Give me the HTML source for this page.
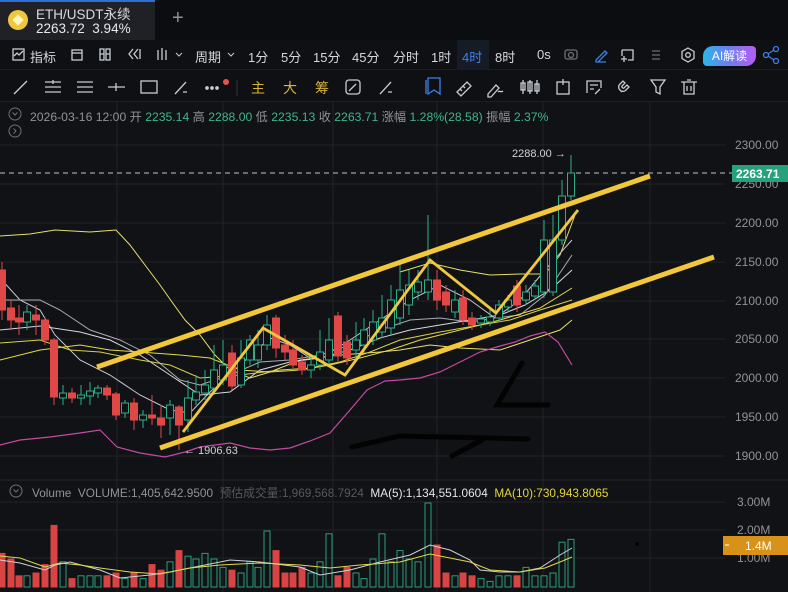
<!DOCTYPE html>
<html><head><meta charset="utf-8"><style>
*{margin:0;padding:0;box-sizing:border-box}
body{width:788px;height:592px;overflow:hidden;background:#111215;font-family:"Liberation Sans","Noto Sans CJK SC",sans-serif;position:relative;color:#c9ccd2}
.abs{position:absolute;white-space:nowrap}
.t{font-size:13px;color:#d5d8dd}
</style></head><body>
<!-- top bar -->
<div class="abs" style="left:0;top:0;width:788px;height:40px;background:#0c0d10"></div>
<div class="abs" style="left:0;top:0;width:155px;height:40px;background:#1f2126"></div>
<div class="abs" style="left:0;top:0;width:155px;height:2px;background:#2f6fd6"></div>
<div class="abs" style="left:8px;top:10px;width:20px;height:20px;border-radius:50%;background:#f0c63a"></div>
<div class="abs" style="left:14px;top:16px;width:8px;height:8px;background:#fff3c0;transform:rotate(45deg)"></div>
<div class="abs" style="left:36px;top:3px;font-size:13.5px;color:#d8dbe0">ETH/USDT永续</div>
<div class="abs" style="left:36px;top:21px;font-size:13.5px;color:#e6e8ec">2263.72&nbsp; 3.94%</div>
<div class="abs" style="left:172px;top:7px;font-size:20px;color:#8d9198">+</div>
<!-- toolbar row -->
<div class="abs" style="left:0;top:40px;width:788px;height:30px;background:#0f1013;border-bottom:1px solid #1c1e22"></div>
<svg class="abs" style="left:0;top:40px" width="788" height="30" fill="none" stroke="#c8ccd2" stroke-width="1.3">
<rect x="13" y="9" width="11" height="11"/><path d="M14 16l3-3 2 2 4-4"/>
<rect x="72" y="10" width="10" height="10"/><path d="M72 13h10"/>
<rect x="100" y="9" width="4" height="11"/><rect x="106" y="9" width="4" height="11"/><path d="M100 14h4M106 14h4"/>
<path d="M133 9l-4 5 4 5M138 9l-4 5 4 5M140 9v10"/>
<path d="M158 10v10M162 8v12M166 10v10" /><path d="M176 13l3 3 3-3" stroke-width="1"/>
<path d="M228 13l3 3 3-3" stroke-width="1"/>
<rect x="565" y="10" width="12" height="9" rx="2" stroke="#6b6f76"/><circle cx="571" cy="15" r="2.5" stroke="#6b6f76"/>
<path d="M596 20l9-9 2 2-9 9h-2zM596 22h10" stroke="#3d7fe8"/>
<path d="M622 10h11v10h-5M622 10v6M621 19h6M624 16v6" />
<path d="M652 11h8M652 15h8M652 19h8" stroke="#6b6f76"/>
<path d="M688 8l6 3.5v7L688 22l-6-3.5v-7z"/><circle cx="688" cy="15" r="2.3"/>
<circle cx="766" cy="15" r="2.5" stroke="#3d7fe8"/><circle cx="776" cy="9" r="2.5" stroke="#3d7fe8"/><circle cx="776" cy="21" r="2.5" stroke="#3d7fe8"/><path d="M768 14l6-4M768 16l6 4" stroke="#3d7fe8"/>
</svg>
<div class="abs t" style="left:30px;top:47px">指标</div>
<div class="abs t" style="left:195px;top:47px">周期</div>
<div class="abs t" style="left:248px;top:47px">1分</div>
<div class="abs t" style="left:281px;top:47px">5分</div>
<div class="abs t" style="left:313px;top:47px">15分</div>
<div class="abs t" style="left:352px;top:47px">45分</div>
<div class="abs t" style="left:393px;top:47px">分时</div>
<div class="abs t" style="left:431px;top:47px">1时</div>
<div class="abs" style="left:457px;top:40px;width:32px;height:30px;background:#161c26"></div>
<div class="abs t" style="left:462px;top:47px;color:#3d7fe8">4时</div>
<div class="abs t" style="left:495px;top:47px">8时</div>
<div class="abs t" style="left:537px;top:47px">0s</div>
<div class="abs" style="left:703px;top:46px;width:53px;height:20px;border-radius:10px 4px 10px 4px;background:linear-gradient(90deg,#2bb6e8,#6e7df0,#b75cf2);font-size:12px;color:#fff;text-align:center;line-height:20px">AI解读</div>
<!-- drawing tools row -->
<div class="abs" style="left:0;top:70px;width:788px;height:32px;background:#0f1013;border-bottom:1px solid #1c1e22"></div>
<svg class="abs" style="left:0;top:70px" width="788" height="32" fill="none" stroke="#c8ccd2" stroke-width="1.3">
<path d="M14 24L27 11"/>
<path d="M45 12h16M45 17h16M45 22h16M53 10v4"/>
<path d="M77 12h16M77 17h16M77 22h16"/>
<path d="M108 17h17M116 13v8"/>
<rect x="141" y="11" width="16" height="12"/>
<path d="M175 24l11-12M183 22h4"/>
<circle cx="207" cy="18" r="1.2" fill="#c8ccd2"/><circle cx="212" cy="18" r="1.2" fill="#c8ccd2"/><circle cx="217" cy="18" r="1.2" fill="#c8ccd2"/>
<circle cx="226" cy="12" r="3" fill="#e2564a" stroke="none"/>
<path d="M237 10v16" stroke="#2a2c31"/>
<rect x="346" y="10" width="14" height="14" rx="3"/><path d="M349 21l7-7"/>
<path d="M380 24l11-12M388 22h4"/>
<path d="M428 8h12v16l-6-4-6 4zM426 10v14" stroke="#3d7fe8"/>
<path d="M457 22l10-10 4 4-10 10zM460 19l2 2M463 16l2 2"/>
<path d="M488 24l8-9 3 3-8 9h-3zM498 22c2-2 3 1 5-1"/>
<path d="M523 10v14M530 10v14M537 10v14" /><rect x="521" y="13" width="4" height="7"/><rect x="528" y="12" width="4" height="9"/><rect x="535" y="14" width="4" height="7"/>
<rect x="557" y="12" width="12" height="12"/><path d="M563 9v6"/>
<path d="M587 23v-12h14v7M590 15h8M590 19h4M595 24l5-5"/>
<path d="M622 22l-2-2a4 4 0 0 1 0-6l3-3 2 2-3 3a1.5 1.5 0 0 0 2 2l3-3 2 2-3 3a4 4 0 0 1-6 0"/>
<path d="M651 10h14l-5 7v7l-4-2v-5z"/>
<path d="M681 12h16M684 12v12h10V12M687 10h4M687 16v5M691 16v5"/>
</svg>
<div class="abs" style="left:251px;top:78px;font-size:14px;color:#d9b43a">主</div>
<div class="abs" style="left:283px;top:78px;font-size:14px;color:#d9b43a">大</div>
<div class="abs" style="left:315px;top:78px;font-size:14px;color:#d9b43a">筹</div>

<!-- chart -->
<svg class="abs" style="left:0;top:102px" width="788" height="490" viewBox="0 102 788 490">
<g stroke="#202226" stroke-width="1">
<path d="M0 145H725M0 184H725M0 223H725M0 262H725M0 301H725M0 339H725M0 378H725M0 417H725M0 456H725"/>
<path d="M117 102V592M223 102V592M333 102V592M437 102V592M543 102V592M650 102V592"/>
<path d="M0 502H725M0 530H725M0 558H725"/>
</g>
<path d="M0 480H788" stroke="#24262b"/>
<path d="M0 173H732" stroke="#bfc3c9" stroke-dasharray="5 4" stroke-width="1"/>
<polyline fill="none" stroke="#e6df6a" stroke-width="1" points="0,236 30,234 55,230 90,232 116,230 130,245 145,265 160,285 172,302 185,320 200,335 215,355 230,370 250,378 270,372 300,360 340,355 380,352 400,350 430,345 460,348 500,350 530,340 560,330 572,320"/>
<polyline fill="none" stroke="#e6df6a" stroke-width="1" points="400,272 430,263 460,270 490,275 520,274 545,274 560,255 575,215"/>
<polyline fill="none" stroke="#c9c9d6" stroke-width="1" points="0,278 20,300 40,310 55,335 80,360 110,375 140,395 170,410 190,413 210,392 240,365 270,338 290,345 310,358 330,352 350,340 380,320 410,300 440,285 470,300 495,318 520,300 545,270 572,240"/>
<polyline fill="none" stroke="#a9acb6" stroke-width="1" points="0,300 40,300 60,310 90,330 120,340 150,355 180,380 200,385 230,375 260,362 290,360 320,355 350,345 380,330 410,320 440,318 470,322 495,318 520,315 545,295 572,255"/>
<polyline fill="none" stroke="#d8d8e0" stroke-width="1" points="0,330 40,326 80,332 110,340 140,355 170,375 200,395 230,392 260,370 290,362 320,358 350,350 380,338 410,330 440,325 470,320 500,315 525,305 550,290 572,270"/>
<polyline fill="none" stroke="#d9cf4a" stroke-width="1" points="0,343 40,340 70,350 100,352 140,360 170,365 200,378 240,375 280,370 310,368 340,362 370,352 400,340 440,332 480,325 510,320 540,310 572,300"/>
<polyline fill="none" stroke="#e6d84a" stroke-width="1" points="0,360 40,350 80,345 110,350 140,352 180,355 210,358 240,370 270,372 300,370 330,365 360,358 390,350 420,340 460,330 500,320 540,308 572,288"/>
<polyline fill="none" stroke="#c54aa0" stroke-width="1.2" points="0,445 20,440 50,437 80,433 100,430 117,447 140,453 165,457 185,452 200,447 230,443 250,448 270,450 290,448 310,441 330,433 350,410 367,390 385,381 400,380 420,378 440,372 460,362 480,352 500,346 515,342 530,336 545,332 558,342 572,365"/>
<g id="c" stroke-width="1"></g>
<g stroke="#f2c83a" stroke-width="5" stroke-linecap="butt">
<path d="M97 367L650 176"/><path d="M160 448L714 257"/>
</g>
<polyline fill="none" stroke="#f0c83f" stroke-width="2.8" points="183,432 263,328 345,375 430,260 496,313 578,210"/>
<g stroke="#030303" stroke-width="5" fill="none" stroke-linecap="round">
<path d="M522 363L497 405L548 405"/><path d="M352 447L400 436L528 439"/><path d="M452 456L482 440"/>
</g>
<text x="512" y="157" font-size="11" fill="#d0d3d8" font-family="Liberation Sans">2288.00 →</text>
<text x="184" y="454" font-size="11" fill="#d0d3d8" font-family="Liberation Sans">← 1906.63</text>
<g font-size="12" fill="#8f939a" font-family="Liberation Sans">
<text x="735" y="149">2300.00</text><text x="735" y="188">2250.00</text><text x="735" y="227">2200.00</text><text x="735" y="266">2150.00</text><text x="735" y="305">2100.00</text><text x="735" y="343">2050.00</text><text x="735" y="382">2000.00</text><text x="735" y="421">1950.00</text><text x="735" y="460">1900.00</text>
<text x="737" y="506">3.00M</text><text x="737" y="534">2.00M</text><text x="737" y="562">1.00M</text>
</g>
<rect x="732" y="165" width="56" height="17" fill="#26a17b"/>
<text x="736" y="178" font-size="12" font-weight="bold" fill="#fff" font-family="Liberation Sans">2263.71</text>
<rect x="723" y="536" width="65" height="19" fill="#d8921a"/>
<path d="M725 545h4" stroke="#fff"/>
<text x="745" y="550" font-size="12" fill="#fff" font-family="Liberation Sans">1.4M</text>
<circle cx="637" cy="544" r="2" fill="#000"/>
<g id="v"></g>
<polyline fill="none" stroke="#d0d0d8" stroke-width="1" points="0,560 20,563 45,570 55,565 70,562 100,570 120,578 150,575 170,572 200,566 230,560 260,562 300,567 320,575 350,570 380,562 410,555 430,545 450,550 470,560 480,570 500,572 520,572 540,568 560,555 572,548"/>
<polyline fill="none" stroke="#e0d84a" stroke-width="1" points="0,556 20,558 45,567 60,563 80,565 100,568 130,572 160,574 190,568 220,565 260,563 300,565 330,568 360,565 400,562 430,554 450,558 470,562 490,570 520,572 545,568 560,562 572,557"/>
</svg>
<svg class="abs" style="left:8px;top:107px" width="14" height="14" fill="none" stroke="#6e7279"><circle cx="7" cy="7" r="6"/><path d="M4.5 5.5l2.5 2.5 2.5-2.5"/></svg>
<svg class="abs" style="left:8px;top:124px" width="14" height="14" fill="none" stroke="#6e7279"><circle cx="7" cy="7" r="6"/><path d="M5.5 4.5l2.5 2.5-2.5 2.5"/></svg>
<div class="abs" style="left:30px;top:107px;font-size:12.2px;color:#8f939a">2026-03-16 12:00 开 <span style="color:#3fb68b">2235.14</span> 高 <span style="color:#3fb68b">2288.00</span> 低 <span style="color:#3fb68b">2235.13</span> 收 <span style="color:#3fb68b">2263.71</span> 涨幅 <span style="color:#3fb68b">1.28%(28.58)</span> 振幅 <span style="color:#3fb68b">2.37%</span></div>
<svg class="abs" style="left:9px;top:484px" width="14" height="14" fill="none" stroke="#6e7279"><circle cx="7" cy="7" r="6"/><path d="M4.5 5.5l2.5 2.5 2.5-2.5"/></svg>
<div class="abs" style="left:32px;top:484px;font-size:11.8px;color:#8f939a">Volume&nbsp; VOLUME:1,405,642.9500&nbsp; <span style="color:#55585e">预估成交量:1,969,568.7924</span>&nbsp; <span style="color:#e4e6ea">MA(5):1,134,551.0604</span>&nbsp; <span style="color:#e6d43a">MA(10):730,943.8065</span></div>
<script>
var C=[[2,'r',270,310,262,320],[11,'r',308,320,300,330],[19,'r',318,322,305,335],[27,'g',312,322,305,330],[36,'r',315,320,305,335],[45,'r',320,340,318,345],[54,'r',340,397,338,405],[63,'g',393,398,385,405],[72,'r',393,398,388,403],[81,'g',395,398,385,405],[90,'g',391,396,382,405],[98,'g',388,393,385,398],[107,'r',388,395,385,400],[116,'r',394,415,392,420],[125,'g',403,413,400,418],[134,'r',403,420,398,430],[143,'g',415,420,410,428],[152,'r',415,418,395,425],[161,'r',418,425,405,438],[170,'g',405,418,400,435],[179,'r',407,425,405,450],[188,'g',398,420,380,432],[196,'g',392,400,375,405],[205,'g',385,393,370,400],[214,'g',370,388,345,395],[223,'g',365,380,340,385],[232,'r',353,386,345,390],[241,'g',358,385,340,388],[250,'g',340,360,335,365],[258,'g',345,360,330,368],[267,'g',325,345,315,350],[276,'r',318,348,315,358],[285,'r',345,352,335,360],[293,'r',350,365,340,368],[302,'r',362,370,355,375],[311,'g',365,370,355,378],[320,'g',352,365,330,370],[329,'g',340,360,318,365],[338,'r',316,356,312,362],[347,'r',342,358,335,365],[356,'g',340,350,322,360],[364,'g',330,345,318,352],[373,'g',322,340,310,345],[382,'g',318,332,295,338],[391,'g',300,328,285,335],[400,'g',290,318,265,325],[409,'g',285,305,270,315],[418,'g',282,292,270,300],[428,'g',280,292,215,300],[437,'r',280,300,270,310],[446,'r',292,305,285,312],[455,'g',300,312,290,318],[463,'r',298,320,290,325],[472,'r',318,325,312,330],[481,'g',319,323,315,328],[490,'g',317,322,310,326],[499,'g',305,318,300,322],[508,'g',300,307,295,312],[517,'r',286,305,280,312],[526,'g',292,300,285,305],[535,'g',286,296,280,300],[544,'g',240,292,220,298],[553,'g',240,292,215,296],[562,'g',196,240,180,245],[571,'g',173,196,155,200]];
var V=[1.2,1.0,0.4,0.4,0.5,0.8,2.2,0.9,0.3,0.4,0.4,0.4,0.4,0.5,0.3,0.5,0.3,0.8,0.6,0.9,1.3,1.1,1.0,1.2,1.0,0.7,0.6,0.5,0.9,0.7,2.0,1.3,0.5,0.5,0.7,0.5,0.9,1.9,0.4,0.7,0.5,0.3,1.0,1.9,0.9,1.3,1.0,0.9,3.0,1.5,0.5,0.4,0.5,0.4,0.3,0.2,0.4,0.4,0.4,0.7,0.4,0.4,0.5,1.6,1.7,1.4,1.4];
var s='',v='';
C.forEach(function(c,i){var x=c[0],r=c[1]=='r',col=r?'#e04848':'#2fae86';
s+='<line x1="'+x+'" x2="'+x+'" y1="'+c[4]+'" y2="'+c[2]+'" stroke="'+col+'"/><line x1="'+x+'" x2="'+x+'" y1="'+c[3]+'" y2="'+c[5]+'" stroke="'+col+'"/>';
s+='<rect x="'+(x-3.5)+'" y="'+c[2]+'" width="7" height="'+Math.max(1,c[3]-c[2])+'" fill="'+(r?col:'#111215')+'" stroke="'+col+'"/>';
var h=(V[i]||0.5)*28;v+='<rect x="'+(x-3)+'" y="'+(587-h)+'" width="6" height="'+h+'" fill="'+(r?'#d84444':'none')+'" stroke="'+(r?'#d84444':'#2a9e7a')+'"/>';});
document.getElementById('c').innerHTML=s;document.getElementById('v').innerHTML=v;
</script>
</body></html>
